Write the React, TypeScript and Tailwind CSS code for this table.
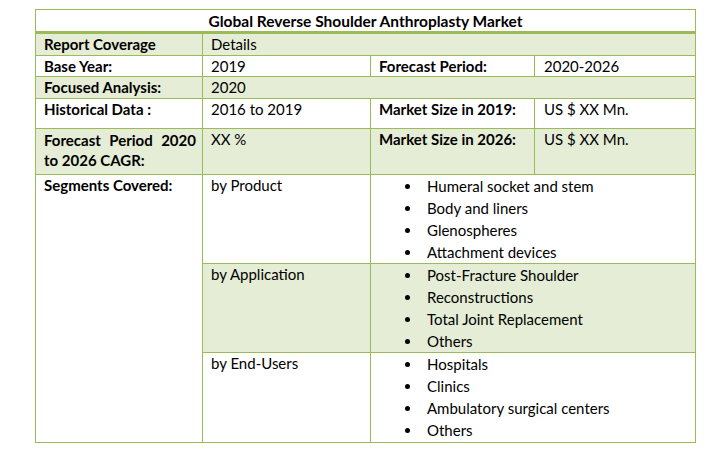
import React from "react";

const G = "bg-[#E5EDD6]";
const B = "border border-[#9BBB59]";

function Bullets({ items }: { items: string[] }) {
  return (
    <div className="flex flex-col">
      {items.map((t) => (
        <div key={t} className="flex h-[22px] items-center leading-[22px]">
          <span className="ml-[34px] w-[22px] shrink-0 flex items-center">
            <span className="block w-[5px] h-[5px] rounded-full bg-black" />
          </span>
          <span>{t}</span>
        </div>
      ))}
    </div>
  );
}

export default function App() {
  const font = { fontFamily: "Lato, 'Open Sans', sans-serif" };
  return (
    <div className="w-[717px] h-[453px] bg-white" style={font}>
      <div className="pt-[9px] pl-[35px]">
        <table className="border-collapse table-fixed text-[15px] text-black leading-[18px] w-[660px]">
          <colgroup>
            <col className="w-[167px]" />
            <col className="w-[168px]" />
            <col className="w-[164px]" />
            <col className="w-[161px]" />
          </colgroup>
          <tbody>
            <tr className="h-[23px]">
              <td colSpan={4} className={`${B} border-b-[3px] text-center text-[15.5px] font-bold align-middle p-0`}>
                Global Reverse Shoulder Anthroplasty Market
              </td>
            </tr>
            <tr className={`h-[23px] ${G}`}>
              <td className={`${B} px-[8px] pt-[1px] font-bold align-top`}>Report Coverage</td>
              <td colSpan={3} className={`${B} px-[8px] pt-[1px] align-top`}>Details</td>
            </tr>
            <tr className="h-[21px]">
              <td className={`${B} px-[8px] pt-[1px] font-bold align-top`}>Base Year:</td>
              <td className={`${B} px-[8px] pt-[1px] align-top`}>2019</td>
              <td className={`${B} px-[8px] pt-[1px] font-bold align-top`}>Forecast Period:</td>
              <td className={`${B} px-[9px] pt-[1px] align-top`}>2020-2026</td>
            </tr>
            <tr className={`h-[22px] ${G}`}>
              <td className={`${B} px-[8px] pt-[1px] font-bold align-top`}>Focused Analysis:</td>
              <td colSpan={3} className={`${B} px-[8px] pt-[1px] align-top`}>2020</td>
            </tr>
            <tr className="h-[30px]">
              <td className={`${B} px-[8px] pt-[1px] font-bold align-top`}>Historical Data :</td>
              <td className={`${B} px-[8px] pt-[1px] align-top`}>2016 to 2019</td>
              <td className={`${B} px-[8px] pt-[1px] font-bold align-top`}>Market Size in 2019:</td>
              <td className={`${B} px-[9px] pt-[1px] align-top`}>US $ XX Mn.</td>
            </tr>
            <tr className={`h-[46px] ${G}`}>
              <td className={`${B} pl-[8px] pr-[6px] pt-[1px] font-bold align-top leading-[20px]`}>
                <div className="flex justify-between whitespace-nowrap">
                  <span>Forecast</span>
                  <span>Period</span>
                  <span>2020</span>
                </div>
                <div>to 2026 CAGR:</div>
              </td>
              <td className={`${B} px-[8px] pt-[1px] align-top`}>XX %</td>
              <td className={`${B} px-[8px] pt-[1px] font-bold align-top`}>Market Size in 2026:</td>
              <td className={`${B} px-[9px] pt-[1px] align-top`}>US $ XX Mn.</td>
            </tr>
            <tr className="h-[89px]">
              <td rowSpan={3} className={`${B} px-[8px] pt-[1px] font-bold align-top`}>Segments Covered:</td>
              <td className={`${B} px-[8px] pt-[1px] align-top`}>by Product</td>
              <td colSpan={2} className={`${B} p-0 align-top`}>
                <Bullets items={["Humeral socket and stem", "Body and liners", "Glenospheres", "Attachment devices"]} />
              </td>
            </tr>
            <tr className="h-[89px]">
              <td className={`${B} ${G} px-[8px] pt-[1px] align-top`}>by Application</td>
              <td colSpan={2} className={`${B} ${G} p-0 align-top`}>
                <Bullets items={["Post-Fracture Shoulder", "Reconstructions", "Total Joint Replacement", "Others"]} />
              </td>
            </tr>
            <tr className="h-[90px]">
              <td className={`${B} px-[8px] pt-[1px] align-top`}>by End-Users</td>
              <td colSpan={2} className={`${B} p-0 align-top`}>
                <Bullets items={["Hospitals", "Clinics", "Ambulatory surgical centers", "Others"]} />
              </td>
            </tr>
          </tbody>
        </table>
      </div>
    </div>
  );
}
